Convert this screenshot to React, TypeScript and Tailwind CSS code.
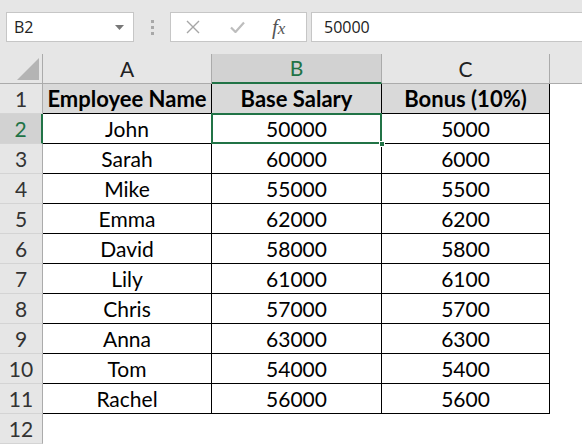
import React from "react";

const rows: [string, string, string][] = [
  ["John", "50000", "5000"],
  ["Sarah", "60000", "6000"],
  ["Mike", "55000", "5500"],
  ["Emma", "62000", "6200"],
  ["David", "58000", "5800"],
  ["Lily", "61000", "6100"],
  ["Chris", "57000", "5700"],
  ["Anna", "63000", "6300"],
  ["Tom", "54000", "5400"],
  ["Rachel", "56000", "5600"],
];

const font = { fontFamily: "Lato, 'Open Sans', sans-serif" };

function TopBar() {
  return (
    <div className="h-[54px] bg-[#e6e6e6] flex items-start pt-[12px] relative" style={{ fontFamily: "'Open Sans', 'Noto Sans', sans-serif" }}>
      <div className="ml-[6px] w-[128px] h-[30px] bg-white border border-[#c6c6c6] flex items-center justify-between pl-[7px] pr-[9px]">
        <span className="text-[16px] text-[#222]">B2</span>
        <svg width="9" height="5" viewBox="0 0 9 5"><path d="M0 0h9L4.5 5z" fill="#777" /></svg>
      </div>
      <div className="ml-[17px] mt-[8px] flex flex-col gap-[3px]">
        <div className="w-[3px] h-[3px] bg-[#a8a8a8]" />
        <div className="w-[3px] h-[3px] bg-[#a8a8a8]" />
        <div className="w-[3px] h-[3px] bg-[#a8a8a8]" />
      </div>
      <div className="ml-[16px] w-[137px] h-[30px] bg-white border border-[#c6c6c6] flex items-center">
        <svg className="ml-[15px]" width="14" height="14" viewBox="0 0 14 14">
          <path d="M1 1L13 13M13 1L1 13" stroke="#a6a6a6" strokeWidth="1.4" />
        </svg>
        <svg className="ml-[30px]" width="15" height="12" viewBox="0 0 15 12">
          <path d="M1 6.5L5.5 11L14 1.5" stroke="#bdbdbd" strokeWidth="2.2" fill="none" />
        </svg>
        <span className="ml-[27px] text-[21px] italic text-[#555] leading-none" style={{ fontFamily: "'Liberation Serif', serif" }}>
          f<span className="text-[17px]">x</span>
        </span>
      </div>
      <div className="ml-[4px] flex-1 h-[30px] bg-white border border-[#c6c6c6] border-r-0 flex items-center pl-[12px]">
        <span className="text-[16px] text-[#222]">50000</span>
      </div>
    </div>
  );
}

export default function App() {
  const colHead = "h-[30px] bg-[#e6e6e6] border-r border-b border-[#ababab] flex items-center justify-center text-[21px] text-[#222]";
  const rowHead = "h-[30px] bg-[#e6e6e6] border-r border-b border-r-[#ababab] border-b-[#d4d4d4] flex items-center justify-center text-[21px] text-[#333]";
  const cell = "h-[30px] border-r border-b border-black flex items-center justify-center text-[21px] text-black";
  return (
    <div className="w-[582px] h-[444px] overflow-hidden bg-white">
      <TopBar />
      <div className="grid grid-cols-[43px_169px_170px_168px_1fr]" style={font}>
        {/* header row */}
        <div className="h-[30px] bg-[#e6e6e6] border-r border-b border-[#ababab] flex items-end justify-end pr-[3px] pb-[3px]">
          <svg width="22" height="22" viewBox="0 0 22 22"><path d="M22 0V22H0z" fill="#b4b4b4" /></svg>
        </div>
        <div className={colHead}>A</div>
        <div className="h-[30px] bg-[#d2d2d2] border-r border-r-[#ababab] border-b-2 border-b-[#217346] flex items-center justify-center text-[21px] text-[#217346]">B</div>
        <div className={colHead}>C</div>
        <div className="h-[30px] bg-[#e6e6e6] border-b border-[#ababab]" />

        {/* row 1 */}
        <div className={rowHead}>1</div>
        <div className={`${cell} bg-[#d9d9d9] font-bold !text-[22px]`}>Employee Name</div>
        <div className={`${cell} bg-[#d9d9d9] font-bold !text-[22px]`}>Base Salary</div>
        <div className={`${cell} bg-[#d9d9d9] font-bold !text-[22px]`}>Bonus (10%)</div>
        <div className="h-[30px]" />

        {rows.map((r, i) => {
          const n = i + 2;
          const sel = n === 2;
          return (
            <React.Fragment key={n}>
              {sel ? (
                <div className="h-[30px] bg-[#d2d2d2] border-r-2 border-b border-r-[#217346] border-b-[#d4d4d4] flex items-center justify-center text-[21px] text-[#217346]">
                  {n}
                </div>
              ) : (
                <div className={rowHead}>{n}</div>
              )}
              <div className={cell}>{r[0]}</div>
              <div className={`${cell} ${sel ? "relative" : ""}`}>
                {r[1]}
                {sel && (
                  <>
                    <div className="absolute left-[-1px] top-[-1px] right-[-1px] bottom-[-1px] border-2 border-[#217346]" />
                    <div className="absolute right-[-4px] bottom-[-4px] w-[6px] h-[6px] bg-[#217346] border border-white" />
                  </>
                )}
              </div>
              <div className={cell}>{r[2]}</div>
              <div className="h-[30px]" />
            </React.Fragment>
          );
        })}

        {/* row 12 */}
        <div className={rowHead}>12</div>
        <div className="h-[30px]" />
        <div className="h-[30px]" />
        <div className="h-[30px]" />
        <div className="h-[30px]" />
      </div>
    </div>
  );
}
